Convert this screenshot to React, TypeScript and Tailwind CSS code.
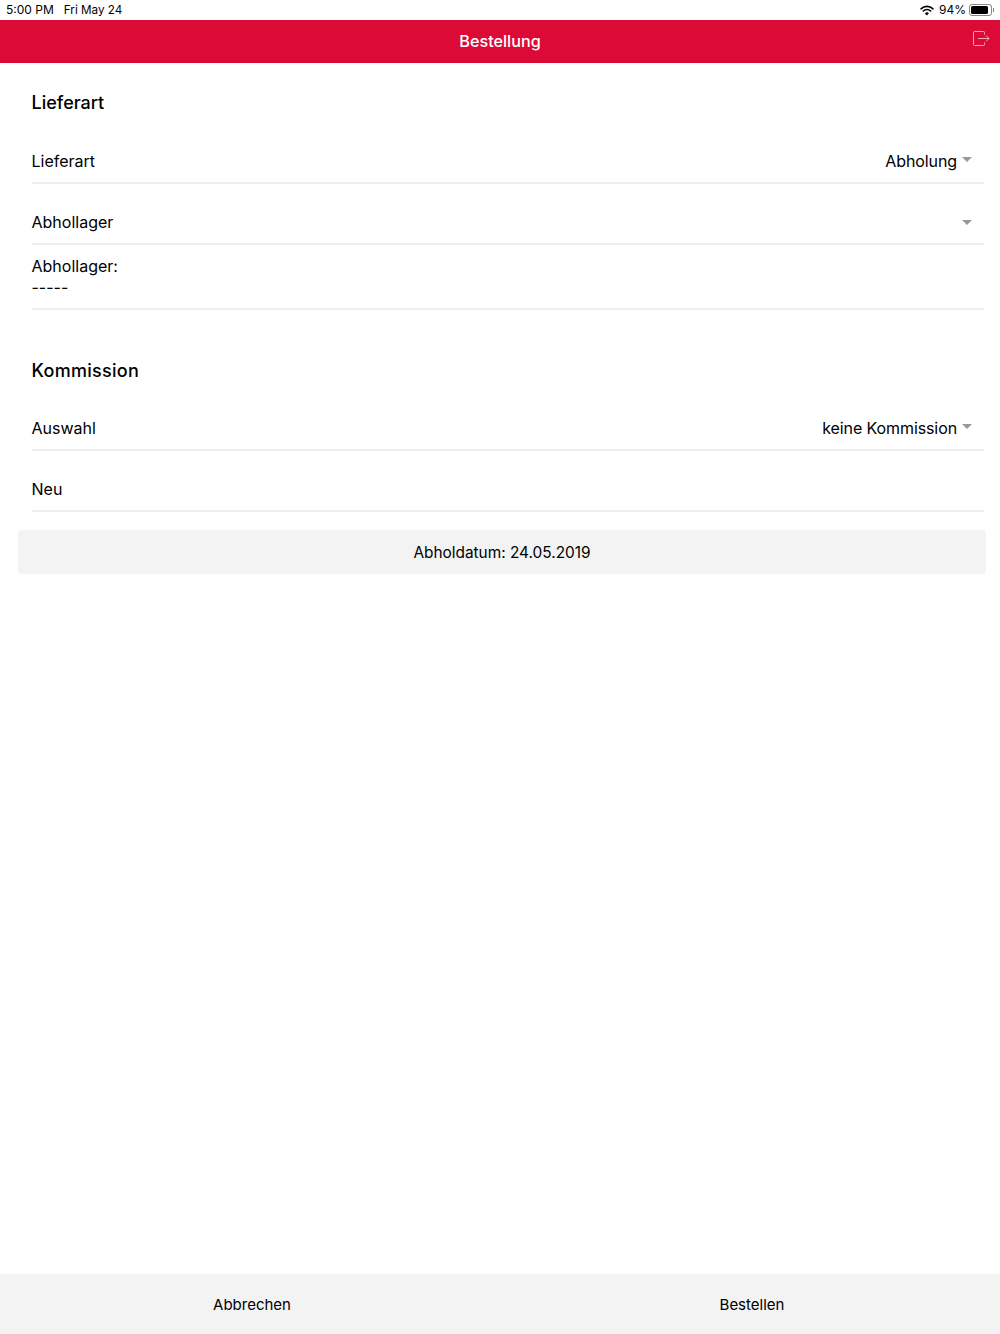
import React from 'react'

const SelectRow: React.FC<{ label: string; value?: string }> = ({ label, value }) => (
  <div className="flex h-[61px] items-end border-b-2 border-[#eeeeee] pb-[9px] pr-[12px]">
    <span className="flex-1 text-[16px] leading-[24px]">{label}</span>
    <span className="flex h-[24px] items-center text-[16px] leading-[24px] tracking-[-0.1px]">
      {value}
      <span
        className={`ml-[5px] h-0 w-0 border-x-[5px] border-t-[5px] border-x-transparent border-t-[#999999] ${
          value ? 'mb-[3px]' : 'mt-[1px]'
        }`}
      />
    </span>
  </div>
)

export default function App() {
  return (
    <div className="flex h-[1334px] w-full flex-col bg-white font-['Inter',sans-serif] text-black">
      {/* Statusleiste */}
      <div className="flex h-[20px] items-center justify-between pl-[6px] pr-[6px] text-[12px]">
        <div className="flex items-center gap-[10px]">
          <span>5:00 PM</span>
          <span className="text-[11.7px] leading-[16px]">Fri May 24</span>
        </div>
        <div className="flex items-center gap-[3px]">
          <svg className="mr-[2px]" width="14" height="11" viewBox="0 0 14 11" fill="none" stroke="#000" strokeLinecap="round">
            <path d="M1 3.8C4.4.6 9.6.6 13 3.8" strokeWidth="1.6" />
            <path d="M3.3 6C5.4 4.2 8.6 4.2 10.7 6" strokeWidth="1.6" />
            <path d="M5.6 8.2c.8-.7 2-.7 2.8 0L7 9.8z" fill="#000" strokeWidth="1" />
          </svg>
          <span>94%</span>
          <div className="flex items-center">
            <div className="h-[12px] w-[23px] rounded-[3px] border border-[#888888] p-[1px]">
              <div className="h-full w-[92%] rounded-[1.5px] bg-black" />
            </div>
            <div className="ml-[1px] h-[4px] w-[1px] bg-[#888888]" />
          </div>
        </div>
      </div>

      {/* Kopfzeile */}
      <div className="relative flex h-[43px] items-center justify-center bg-[#dc0a36]">
        <span className="text-[16.2px] font-medium text-white">Bestellung</span>
        <svg
          className="absolute right-[10px] top-[11px]"
          width="17"
          height="15"
          viewBox="0 0 17 15"
          fill="none"
          stroke="#f6a5b6"
          strokeWidth="1"
        >
          <path d="M11.5 3.5V1.5a1 1 0 0 0-1-1H1.5a1 1 0 0 0-1 1v12a1 1 0 0 0 1 1h9a1 1 0 0 0 1-1v-2" />
          <path d="M5 7.5h11M13 4.5l3 3-3 3" />
        </svg>
      </div>

      {/* Inhalt */}
      <div className="flex-1 pl-[31.5px] pr-[16px]">
        <h2 className="mt-[28px] text-[18px] font-medium leading-[24px]">Lieferart</h2>
        <div className="mt-[8px]">
          <SelectRow label="Lieferart" value="Abholung" />
          <SelectRow label="Abhollager" />
        </div>
        <div className="border-b-2 border-[#eeeeee] pb-[10px] pt-[11px] text-[16px] leading-[21px]">
          <div>Abhollager:</div>
          <div>-----</div>
        </div>

        <h2 className="mt-[49px] text-[18px] font-medium leading-[24px] tracking-[0.3px]">Kommission</h2>
        <div className="mt-[7px]">
          <SelectRow label="Auswahl" value="keine Kommission" />
          <div className="flex h-[61px] items-end border-b-2 border-[#eeeeee] pb-[9px]">
            <span className="text-[16px] leading-[24px]">Neu</span>
          </div>
        </div>

        <div className="-ml-[13.5px] -mr-[2px] mt-[18px] flex h-[44px] items-center justify-center rounded-[4px] bg-[#f3f3f3] pt-[1px] text-[15.4px]">
          Abholdatum: 24.05.2019
        </div>
      </div>

      {/* Fußleiste */}
      <div className="grid h-[60px] grid-cols-2 bg-[#f3f3f3] pt-[2px] text-[15px]">
        <button className="pl-[4px]">Abbrechen</button>
        <button className="pl-[4px]">Bestellen</button>
      </div>
    </div>
  )
}
